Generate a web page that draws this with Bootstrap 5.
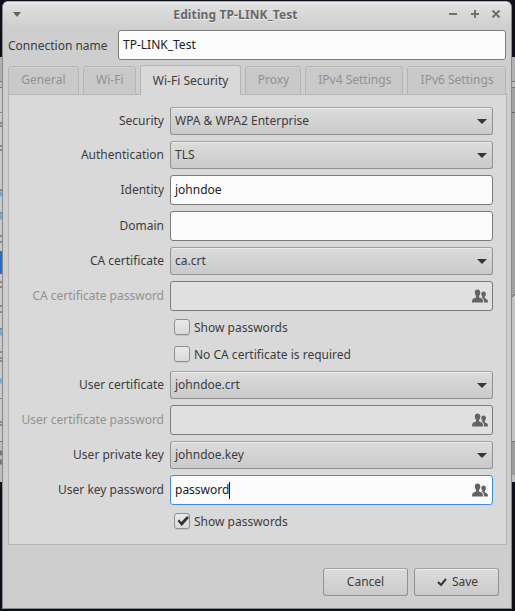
<!DOCTYPE html>
<html lang="en">
<head>
<meta charset="utf-8">
<title>Editing TP-LINK_Test</title>
<link href="https://cdn.jsdelivr.net/npm/bootstrap@5.3.0/dist/css/bootstrap.min.css" rel="stylesheet">
<style>
html,body{height:611px;overflow:hidden}
body{font:12px/17px "Noto Sans",sans-serif;color:#3c3c3c;background:#0d0f1b}
.desk{width:515px;height:611px}
.behind{left:0;top:0}
.dialog-win{width:510px;height:608px;margin:1px 0 0 2px;background:#cecece;border:1px solid #898989;border-top-color:#a9a9a9;border-radius:6px 6px 0 0;box-shadow:inset 0 1px #f2f2f2}
.titlebar{height:28px;background:linear-gradient(#f0f0f0 0,#f0f0f0 1px,#e0e0e0 2px,#cecece 26px);border-radius:5px 5px 0 0;padding:0 11px 2px 10px;color:#686868}
.menu-side{width:8px}
.titlebar .name{font-weight:700;text-shadow:0 1px #eee;flex:1;text-align:center;padding:0 0 1px 2px;letter-spacing:.12px}
.entry{height:30px;border:1px solid #7b7b7b;border-radius:3px;background:#fcfcfc;color:#212121;padding:0 4px;line-height:28px}
.entry.off{background:#e0e0e0}
.caret{width:1px;height:17px;background:#111}
.entry.focused{border-color:#3f8ce0;line-height:26px}
.conn{padding:0 5px 0 5px;height:30px}
.conn .entry{width:388px}
.tabs{margin:5px 5px 0;height:30px;gap:4px;position:relative;z-index:1}
.tab{height:29px;border:1px solid #b5b5b5;border-radius:3px 3px 0 0;background:#c9c9c9;color:#919191;text-align:center;line-height:25px;box-shadow:inset 0 1px #d2d2d2;padding-left:1px;white-space:nowrap}
.tab.on{height:30px;background:#d9d9d9;color:#3c3c3c;border-bottom:0;line-height:29px;box-shadow:none}
.w1{width:71px;padding-left:0}.w2{width:53px}.w3{width:101px}.w4{width:57px}.w5{width:98px}.w6{width:99px}
.pane{margin:-1px 4px 0 5px;width:499px;height:451px;border:1px solid #b5b5b5;background:#d9d9d9;padding:12px 13px 0 11px}
.fields{display:grid;grid-template-columns:144px 323px;gap:6px;column-gap:6px}
.lab{text-align:right;align-self:center;padding-bottom:1px;white-space:nowrap}
.lab.off{color:#919191}
.raised{height:28px;border:1px solid #919191;border-top-color:#a2a2a2;border-radius:3px;background:linear-gradient(#dcdcdc,#cacaca);box-shadow:inset 0 1px #efefef;line-height:26px}
.combo{padding:0 5px 0 4px;line-height:24px}
.check-row{grid-column:2;height:21px;padding:2px 0 0 4px;gap:4px}
.box{width:16px;height:16px;border:1px solid #8f8f8f;border-radius:3px;background:linear-gradient(#e9e9e9,#dadada);box-shadow:0 1px #c5c5c5}
.check-row span{line-height:18px}
.footer{gap:6px;padding:23px 12px 0 0}
.footer .raised{width:85px;text-align:center}
.tick{margin-right:5px}
.save{padding-left:2px}
svg{display:block;flex:none}
</style>
</head>
<body>
<div class="desk position-relative">
<svg class="behind position-absolute" width="515" height="611">
<rect y="57" width="515" height="425" fill="#bdbdbd"/>
<rect y="57" width="515" height="25" fill="#b0b0b0"/><path d="M0 81.500H515M0 87.500H515M0 441.500H515" stroke="#777"/>
<rect y="88" width="3" height="353" fill="#c9c9c9"/><path d="M0 112.500H3M0 398.500H3" stroke="#888"/>
<rect x="512" y="88" width="3" height="208" fill="#a0a0a0"/><rect x="512" y="296" width="3" height="145" fill="#c3c3c3"/><path d="M512 112.500h3M512 297l3-3" stroke="#666"/>
<rect x="512" y="442" width="3" height="33" fill="#9c9c9c"/>
<rect y="251" width="3" height="23" fill="#2a6cc0"/>
<path d="M0 123h2M0 126h2M0 146h2M0 150h2M0 190h2M0 213h2M0 236h2M0 242h2M0 282h2M0 287h2M0 306h2M0 312h2M0 329h2M0 352h2M0 358h2M0 361h2M0 422h2M0 425h2" stroke="#4b4550"/>
<path d="M0 194h2M0 217h2M0 333h2M0 381h2" stroke="#73aed0" stroke-width="5"/>
<path d="M0 453h3M0 462h3" stroke="#777" stroke-width="5"/>
</svg>
<div class="dialog-win position-absolute">
<div class="titlebar d-flex align-items-center">
<div class="menu-side"><svg width="8" height="6"><path d="M0 0h8L4 5z" fill="#626262"/></svg></div>
<div class="name">Editing TP-LINK_Test</div>
<svg width="52" height="12" viewBox="-2 1 52 12" fill="none" stroke="#717171" stroke-width="2"><path d="M-1 6h8M21 6h8M25 2v8"/><path d="M42.500 2.500l7 7M49.500 2.500l-7 7"/></svg>
</div>
<div class="conn d-flex justify-content-between align-items-center"><span class="pb-1 pt-1">Connection name</span><div class="entry">TP-LINK_Test</div></div>
<div class="tabs d-flex align-items-end">
<div class="tab w1">General</div><div class="tab w2">Wi-Fi</div><div class="tab on w3">Wi-Fi Security</div><div class="tab w4">Proxy</div><div class="tab w5">IPv4 Settings</div><div class="tab w6">IPv6 Settings</div>
</div>
<div class="pane"><div class="fields">
<div class="lab">Security</div><div class="raised combo d-flex justify-content-between align-items-center"><span>WPA &amp; WPA2 Enterprise</span><svg width="10" height="6"><path d="M0 1h10L5 6z" fill="#353535"/></svg></div>
<div class="lab">Authentication</div><div class="raised combo d-flex justify-content-between align-items-center"><span>TLS</span><svg width="10" height="6"><path d="M0 1h10L5 6z" fill="#353535"/></svg></div>
<div class="lab">Identity</div><div class="entry">johndoe</div>
<div class="lab">Domain</div><div class="entry"></div>
<div class="lab">CA certificate</div><div class="raised combo d-flex justify-content-between align-items-center"><span>ca.crt</span><svg width="10" height="6"><path d="M0 1h10L5 6z" fill="#353535"/></svg></div>
<div class="lab off">CA certificate password</div><div class="entry off d-flex justify-content-end align-items-center"><svg width="16" height="14"><use href="#people"/></svg></div>
<div class="check-row d-flex align-items-start"><div class="box"></div><span>Show passwords</span></div>
<div class="check-row d-flex align-items-start"><div class="box"></div><span>No CA certificate is required</span></div>
<div class="lab">User certificate</div><div class="raised combo d-flex justify-content-between align-items-center"><span>johndoe.crt</span><svg width="10" height="6"><path d="M0 1h10L5 6z" fill="#353535"/></svg></div>
<div class="lab off">User certificate password</div><div class="entry off d-flex justify-content-end align-items-center"><svg width="16" height="14"><use href="#people"/></svg></div>
<div class="lab">User private key</div><div class="raised combo d-flex justify-content-between align-items-center"><span>johndoe.key</span><svg width="10" height="6"><path d="M0 1h10L5 6z" fill="#353535"/></svg></div>
<div class="lab">User key password</div><div class="entry focused d-flex align-items-center"><span>password</span><span class="caret"></span><svg class="ms-auto" width="16" height="14"><defs><g id="people" fill="#636363"><path d="M5.500.500C3.800.500 2.800 1.600 2.800 3.500c0 1.600.700 2.600 1.300 3.300v1.700L1 9.800Q0 10.300 0 13.500h11q0-3.200-1-3.700L7.100 8.500V6.800C7.800 6 8.300 5 8.300 3.500 8.300 1.600 7.200.500 5.500.500z"/><path d="M11.600 2.500c1.500 0 2.300 1 2.300 2.400 0 1.200-.500 2.100-1.100 2.700v1.700l2.300 1.100q.900.500.900 3.100h-4q0-3.200-1-4.100L9 8.600c.800 0 1.400-.300 1.400-.600v-.5C9.700 6.900 9.300 6 9.300 4.900c0-1.400.800-2.400 2.300-2.400z"/></g></defs><use href="#people"/></svg></div>
<div class="check-row d-flex align-items-start"><div class="box"><svg width="14" height="14"><path d="M2.500 7l1.800-1.600L6.300 8l5.200-5.600 2 .200V4.500L6.700 12z" fill="#333"/></svg></div><span>Show passwords</span></div>
</div></div>
<div class="footer d-flex justify-content-end"><div class="raised">Cancel</div><div class="raised save d-flex justify-content-center align-items-center"><svg class="tick" width="10" height="8"><path d="M1 4l3 3 5-6" fill="none" stroke="#353535" stroke-width="2"/></svg><span>Save</span></div></div>
</div>
</div>
<script src="https://cdn.jsdelivr.net/npm/bootstrap@5.3.0/dist/js/bootstrap.bundle.min.js"></script>
</body>
</html>
